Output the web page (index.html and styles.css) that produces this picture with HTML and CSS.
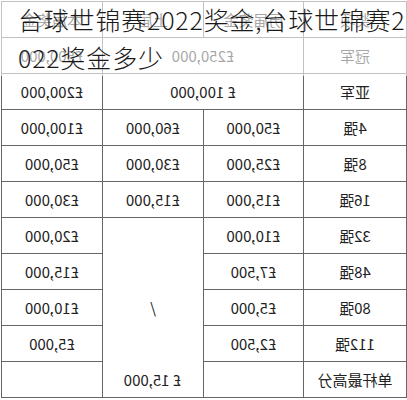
FILE: index.html
```html
<!DOCTYPE html>
<html lang="zh">
<head>
<meta charset="utf-8">
<title>台球世锦赛2022奖金</title>
<link rel="stylesheet" href="styles.css">
</head>
<body>
<div class="page">
  <table class="prize">
    <colgroup>
      <col class="c-name">
      <col class="c-a">
      <col class="c-b">
      <col class="c-c">
    </colgroup>
    <tr><td>奖项</td><td>历届奖金</td><td>上届</td><td>本届奖金</td></tr>
    <tr><td>冠军</td><td colspan="2">£250,000</td><td>£500,000</td></tr>
    <tr><td>亚军</td><td colspan="2">£ 100,000</td><td>£200,000</td></tr>
    <tr><td>4强</td><td>£50,000</td><td>£60,000</td><td>£100,000</td></tr>
    <tr><td>8强</td><td>£25,000</td><td>£30,000</td><td>£50,000</td></tr>
    <tr><td>16强</td><td>£15,000</td><td>£15,000</td><td>£30,000</td></tr>
    <tr><td>32强</td><td>£10,000</td><td rowspan="5">/</td><td>£20,000</td></tr>
    <tr><td>48强</td><td>£7,500</td><td>£15,000</td></tr>
    <tr><td>80强</td><td>£5,000</td><td>£10,000</td></tr>
    <tr><td>112强</td><td>£2,500</td><td>£5,000</td></tr>
    <tr><td>单杆最高分</td><td colspan="3">£ 15,000</td></tr>
  </table>
  <h1 class="title">台球世锦赛2022奖金,台球世锦赛2022奖金多少</h1>
</div>
</body>
</html>
```
FILE: styles.css
```css
html, body {
  margin: 0;
  padding: 0;
  background: #fff;
  overflow: hidden;
}

.page {
  position: relative;
  width: 407px;
  height: 400px;
  padding: 1px 0 0 1px;
  box-sizing: border-box;
  overflow: hidden;
}

.prize {
  border-collapse: collapse;
  table-layout: fixed;
  width: 405px;
  transform: scaleX(-1);
  font: 15px "Noto Sans CJK SC", sans-serif;
  color: #222;
}

.c-name { width: 103px; }
.c-a { width: 100px; }
.c-b { width: 101px; }
.c-c { width: 101px; }

.prize tr { height: 36px; }

.prize td {
  border: 1px solid #666;
  padding: 0;
  text-align: center;
  vertical-align: middle;
  white-space: nowrap;
}

.title {
  position: absolute;
  top: 0;
  left: 0;
  margin: 0;
  padding-left: 18px;
  width: 392px;
  font: 300 25px/38px "Noto Sans CJK SC", sans-serif;
  letter-spacing: 0.8px;
  color: #1a1a1a;
  background: rgba(255, 255, 255, 0.6);
  word-break: break-all;
}
```
